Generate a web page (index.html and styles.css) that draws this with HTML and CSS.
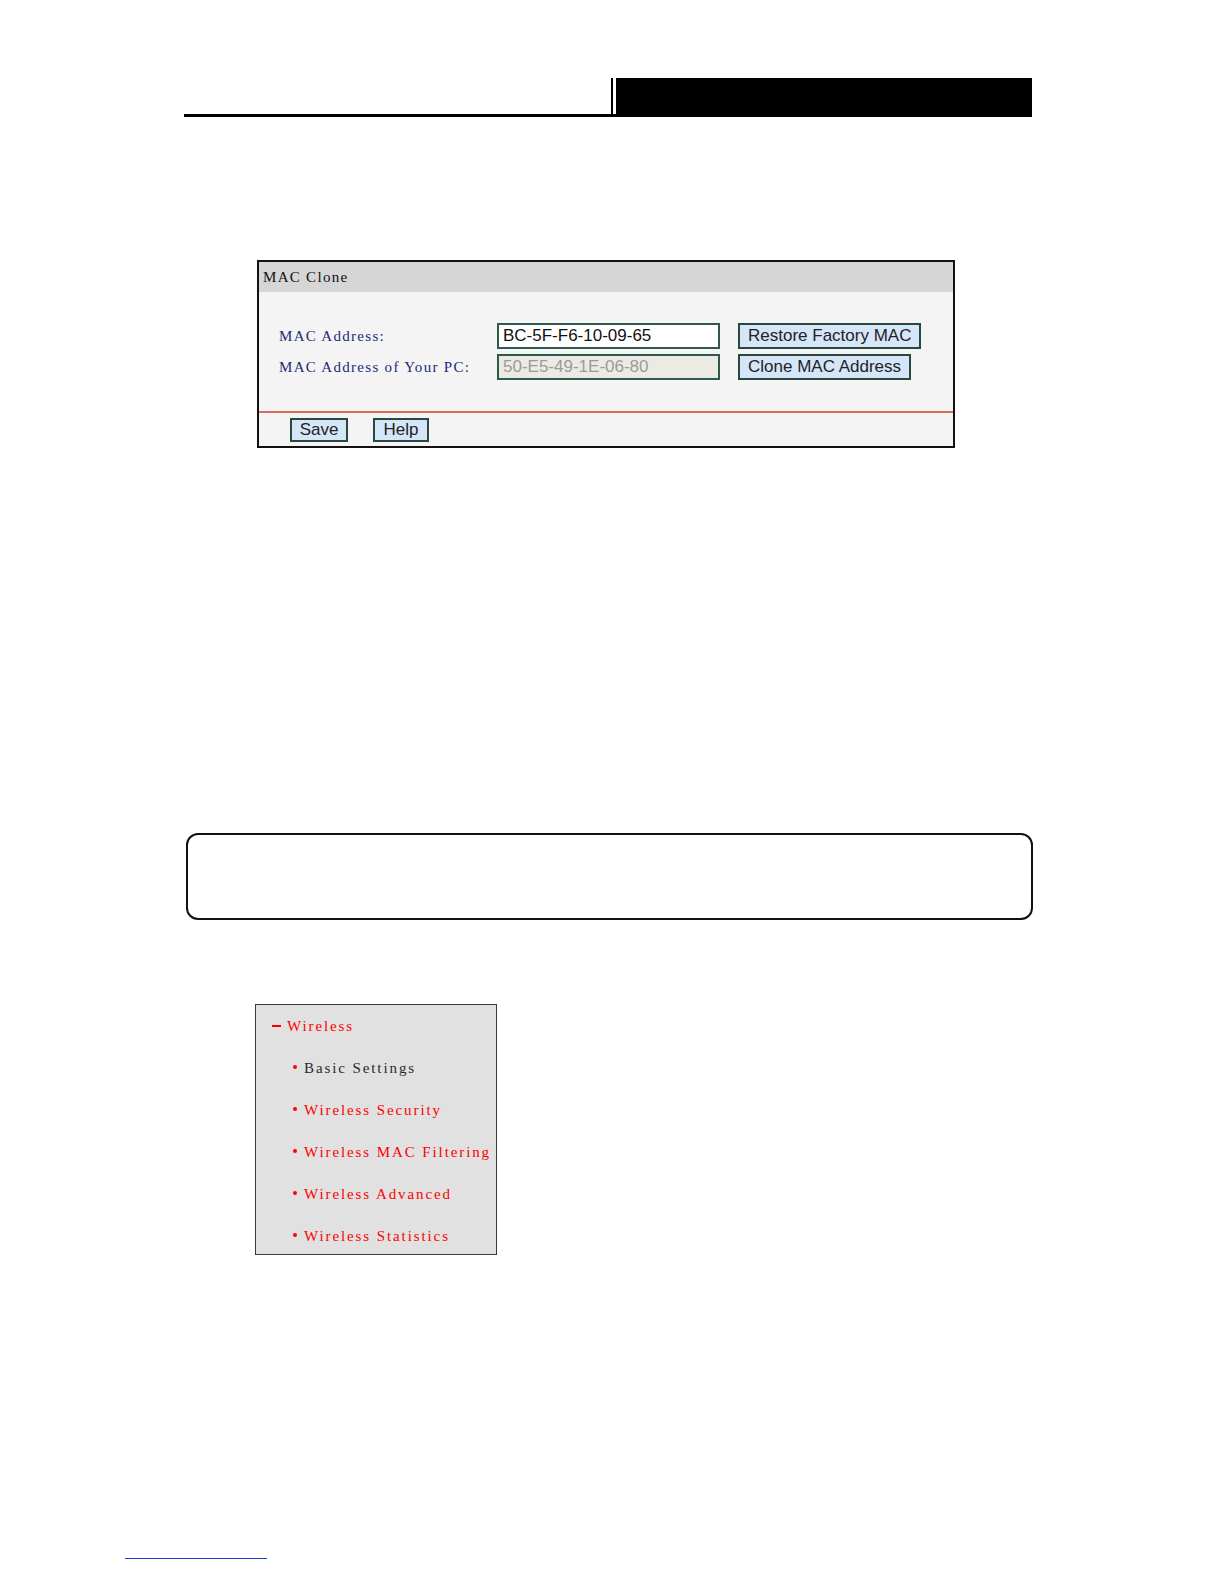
FILE: index.html
```html
<!DOCTYPE html>
<html>
<head>
<meta charset="utf-8">
<title>MAC Clone</title>
<link rel="stylesheet" href="styles.css">
</head>
<body>
<div class="page">
  <div class="header">
    <div class="header-left"></div>
    <div class="header-vline"></div>
    <div class="header-gap"></div>
    <div class="header-bar"></div>
  </div>

  <div class="panel">
    <div class="panel-title">MAC Clone</div>
    <div class="panel-body">
      <div class="row">
        <span class="label">MAC Address:</span>
        <input class="field" type="text" value="BC-5F-F6-10-09-65">
        <button class="btn">Restore Factory MAC</button>
      </div>
      <div class="row">
        <span class="label">MAC Address of Your PC:</span>
        <input class="field field-disabled" type="text" value="50-E5-49-1E-06-80" disabled>
        <button class="btn">Clone MAC Address</button>
      </div>
    </div>
    <div class="panel-foot">
      <button class="btn btn-small btn-save">Save</button>
      <button class="btn btn-small btn-help">Help</button>
    </div>
  </div>

  <div class="note-box"></div>

  <div class="menu">
    <div class="menu-head"><span class="minus"></span>Wireless</div>
    <div class="menu-item dark"><span class="dot"></span>Basic Settings</div>
    <div class="menu-item"><span class="dot"></span>Wireless Security</div>
    <div class="menu-item"><span class="dot"></span>Wireless MAC Filtering</div>
    <div class="menu-item"><span class="dot"></span>Wireless Advanced</div>
    <div class="menu-item"><span class="dot"></span>Wireless Statistics</div>
  </div>

  <div class="foot-line"></div>
</div>
</body>
</html>
```

FILE: styles.css
```css
html, body {
  margin: 0;
  padding: 0;
  background: #ffffff;
}

.page {
  width: 1224px;
  padding-top: 78px;
  font-family: "Liberation Sans", Arial, sans-serif;
}

/* header */
.header {
  display: flex;
  margin-left: 184px;
  width: 848px;
  height: 36px;
  border-bottom: 3px solid #000;
}
.header-left { width: 427px; }
.header-vline { width: 2px; background: #000; margin-bottom: -3px; }
.header-gap { width: 3px; }
.header-bar { flex: 1; background: #000; margin-bottom: -3px; }

/* panel */
.panel {
  margin-top: 143px;
  margin-left: 257px;
  width: 698px;
  box-sizing: border-box;
  border: 2px solid #111;
  background: #f4f4f4;
}
.panel-title {
  height: 30px;
  line-height: 30px;
  background: #d6d6d6;
  padding-left: 4px;
  font-family: "Liberation Serif", "Times New Roman", serif;
  font-size: 15px;
  letter-spacing: 1.3px;
  color: #111;
}
.panel-body {
  padding: 31px 0 31px 20px;
  display: flex;
  flex-direction: column;
  gap: 5px;
  border-bottom: 2px solid #d66e60;
}
.row {
  display: flex;
  align-items: center;
  height: 26px;
}
.label {
  width: 218px;
  font-family: "Liberation Serif", "Times New Roman", serif;
  font-size: 15px;
  letter-spacing: 1.3px;
  color: #1b2a78;
  white-space: nowrap;
}
.field {
  box-sizing: border-box;
  width: 223px;
  height: 26px;
  margin: 0 18px 0 0;
  padding: 0 0 0 4px;
  border: 2px solid #2e5a4c;
  background: #ffffff;
  font-family: "Liberation Sans", Arial, sans-serif;
  font-size: 17px;
  color: #111;
  outline: none;
}
.field-disabled {
  background: #ebebe4;
  color: #9a9a9a;
  -webkit-text-fill-color: #9a9a9a;
  opacity: 1;
}
.btn {
  box-sizing: border-box;
  height: 26px;
  margin: 0;
  padding: 0 8px;
  border: 2px solid #27493f;
  border-radius: 0;
  background: #d5e6f9;
  font-family: "Liberation Sans", Arial, sans-serif;
  font-size: 17px;
  color: #222;
  line-height: 22px;
}
.panel-foot {
  display: flex;
  gap: 25px;
  height: 33px;
  box-sizing: border-box;
  padding: 5px 0 0 31px;
}
.btn-small {
  height: 24px;
  line-height: 20px;
  padding: 0;
}
.btn-save { width: 58px; }
.btn-help { width: 56px; }

/* rounded note box */
.note-box {
  margin-top: 385px;
  margin-left: 186px;
  width: 847px;
  height: 87px;
  box-sizing: border-box;
  border: 2px solid #111;
  border-radius: 12px;
}

/* menu */
.menu {
  margin-top: 84px;
  margin-left: 255px;
  width: 242px;
  height: 251px;
  box-sizing: border-box;
  border: 1px solid #3a3a3a;
  background: #e1e1e1;
  font-family: "Liberation Serif", "Times New Roman", serif;
  font-size: 15px;
  letter-spacing: 1.9px;
  color: #ff0000;
  overflow: hidden;
}
.menu-head, .menu-item {
  height: 42px;
  line-height: 42px;
  display: flex;
  align-items: center;
  white-space: nowrap;
}
.menu-head { padding-left: 16px; }
.minus {
  width: 9px;
  height: 2px;
  background: #ff0000;
  margin-right: 6px;
}
.menu-item { padding-left: 37px; }
.menu-item.dark { color: #2a2a2a; }
.dot {
  width: 4px;
  height: 4px;
  border-radius: 50%;
  background: #ff0000;
  margin-right: 7px;
  margin-top: -3px;
}

/* footer line */
.foot-line {
  margin-top: 303px;
  margin-left: 125px;
  width: 142px;
  height: 1px;
  background: #1a3cc8;
}
```
